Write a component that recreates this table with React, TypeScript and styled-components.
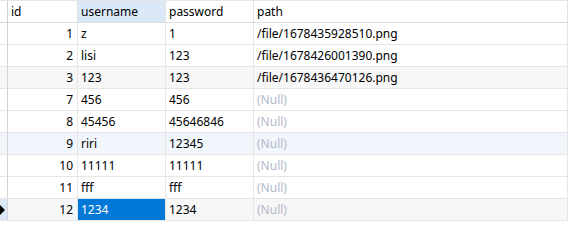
import React from 'react';
import styled, { createGlobalStyle } from 'styled-components';

const GlobalStyle = createGlobalStyle`
  body {
    margin: 0;
    background: #fff;
    font-family: "Noto Sans", "Noto Sans CJK SC", sans-serif;
    font-size: 12px;
    color: #000;
  }
`;

const Grid = styled.div`
  display: grid;
  grid-template-columns: 8px 70px 88px 88px 1fr;
  border-top: 1px solid #e6e6e6;
`;

const HeadCell = styled.div<{ active?: boolean }>`
  height: 21px;
  line-height: 21px;
  padding: 0 3px;
  background: ${p => (p.active ? '#dae8f7' : '#fff')};
  border-right: 1px solid #e2e2e2;
  border-bottom: 1px solid #dcdcdc;
  white-space: nowrap;
  overflow: hidden;
`;

const Marker = styled.div<{ current?: boolean; bg: string }>`
  height: 21px;
  background: ${p => (p.current ? '#dae8f7' : p.bg)};
  border-right: 1px solid #d2d2d2;
  border-bottom: 1px solid #e6e6e6;
  display: flex;
  align-items: center;
  justify-content: flex-start;
`;

const HeadMarker = styled(Marker)`
  border-bottom-color: #dcdcdc;
`;

const Cell = styled.div<{ bg: string; right?: boolean; nul?: boolean; selected?: boolean }>`
  height: 21px;
  line-height: 21px;
  padding: 0 4px 0 3px;
  text-align: ${p => (p.right ? 'right' : 'left')};
  background: ${p => (p.selected ? '#0078d7' : p.bg)};
  color: ${p => (p.selected ? '#fff' : p.nul ? '#b3b9cc' : '#000')};
  border-right: 1px solid #e6e6e6;
  border-bottom: 1px solid #e6e6e6;
  white-space: nowrap;
  overflow: hidden;
`;

const Arrow = styled.span`
  width: 0;
  height: 0;
  border-top: 5px solid transparent;
  border-bottom: 5px solid transparent;
  border-left: 5px solid #000;
`;

type Row = { id: number; username: string; password: string; path: string | null; bg: string };

const rows: Row[] = [
  { id: 1, username: 'z', password: '1', path: '/file/1678435928510.png', bg: '#fff' },
  { id: 2, username: 'lisi', password: '123', path: '/file/1678426001390.png', bg: '#fff' },
  { id: 3, username: '123', password: '123', path: '/file/1678436470126.png', bg: '#f7f7f7' },
  { id: 7, username: '456', password: '456', path: null, bg: '#fff' },
  { id: 8, username: '45456', password: '45646846', path: null, bg: '#fff' },
  { id: 9, username: 'riri', password: '12345', path: null, bg: '#f1f6fd' },
  { id: 10, username: '11111', password: '11111', path: null, bg: '#fff' },
  { id: 11, username: 'fff', password: 'fff', path: null, bg: '#fff' },
  { id: 12, username: '1234', password: '1234', path: null, bg: '#f7f7f7' },
];

export default function App() {
  return (
    <>
      <GlobalStyle />
      <Grid>
        <HeadMarker bg="#fff" />
        <HeadCell>id</HeadCell>
        <HeadCell active>username</HeadCell>
        <HeadCell>password</HeadCell>
        <HeadCell>path</HeadCell>
        {rows.map(r => {
          const current = r.id === 12;
          return (
            <React.Fragment key={r.id}>
              <Marker bg={r.bg} current={current}>{current && <Arrow />}</Marker>
              <Cell bg={r.bg} right>{r.id}</Cell>
              <Cell bg={r.bg} selected={current}>{r.username}</Cell>
              <Cell bg={r.bg}>{r.password}</Cell>
              <Cell bg={r.bg} nul={r.path === null}>{r.path ?? '(Null)'}</Cell>
            </React.Fragment>
          );
        })}
      </Grid>
    </>
  );
}
